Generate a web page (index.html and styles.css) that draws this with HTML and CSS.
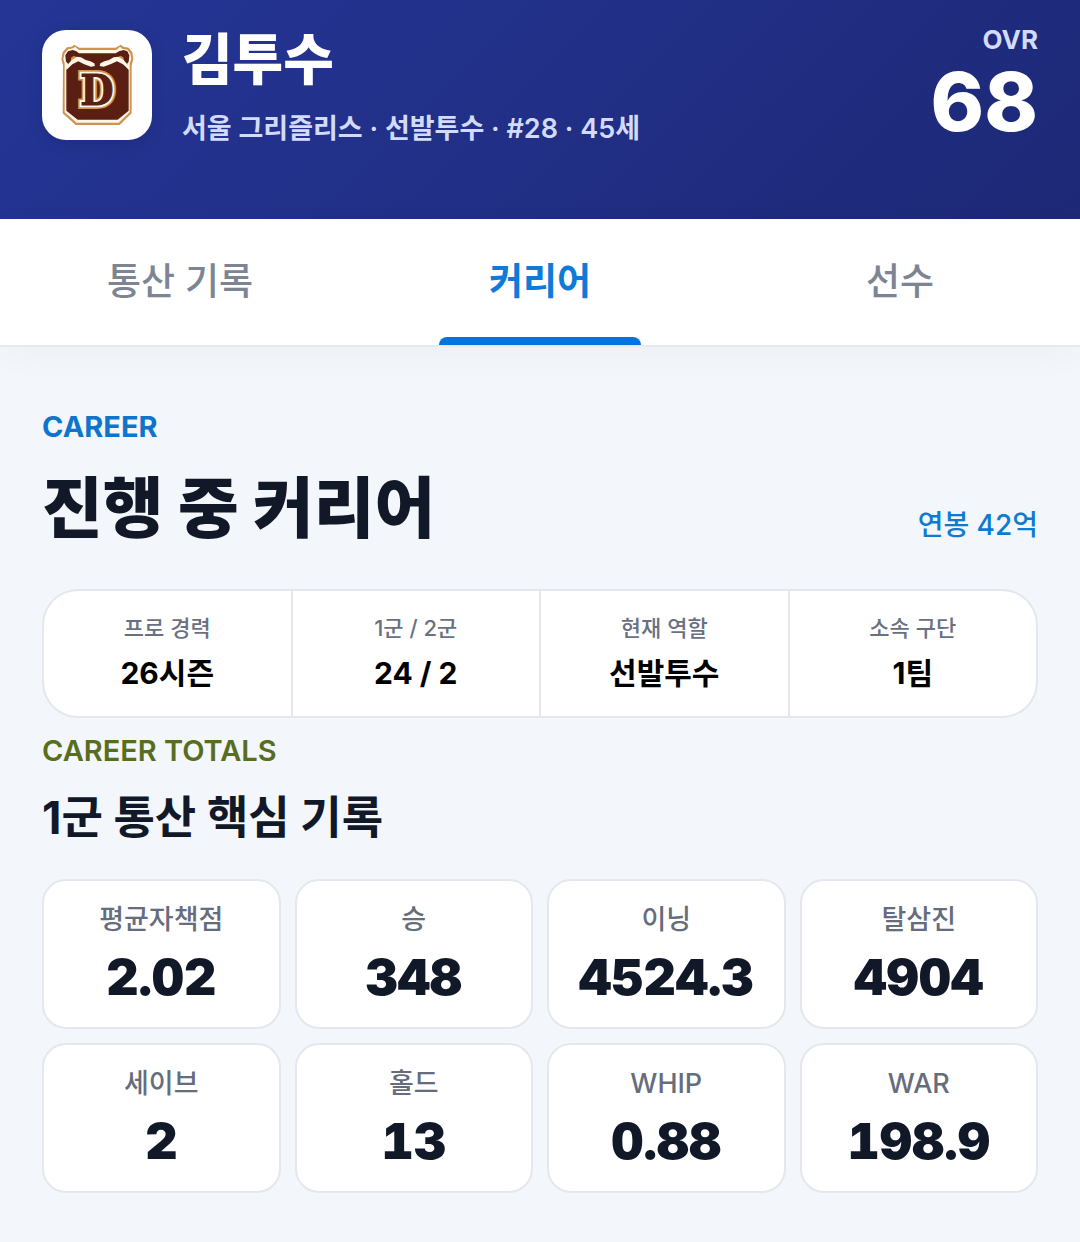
FILE: index.html
```html
<!DOCTYPE html>
<html lang="ko">
<head>
    <meta charset="UTF-8">
    <meta name="viewport" content="width=device-width, initial-scale=1.0">
    <title>김투수 - 커리어</title>
    <link rel="stylesheet" href="styles.css">
</head>
<body>
    <header class="player-header">
        <div class="team-logo">
            <svg viewBox="35 30 330 330" role="img" aria-label="서울 그리즐리스">
                <path class="logo-gold" d="M98 136L93 118L97 97L110 82L124 80L132 74L147 83H256L271 74L279 80L295 83L306 97L309 118L304 136V280L268 315H136L97 280Z"/>
                <path class="logo-cream" d="M103 130L99 117L103 100L114 88L128 85L134 80L146 90H258L269 80L276 86L291 89L300 101L303 117L298 130V277L265 308H139L103 277Z"/>
                <path class="logo-brown" d="M107 125L105 106L113 94L127 90L138 94L146 100H256L266 94L280 90L291 94L297 106L295 125L290 132L295 142V272L262 299H142L108 272V144L114 132Z"/>
                <path class="logo-gold" d="M121 122L123 112L132 107L142 113L132 120ZM281 122L279 112L270 107L260 113L270 120Z"/>
                <path class="logo-cream" d="M107 140L124 120L140 110L152 112L166 120L180 124L192 130L194 138L182 140L160 132L144 124L126 133L108 150ZM297 140L280 120L264 110L250 112L236 120L222 124L210 130L208 138L220 140L242 132L260 124L278 133L296 150Z"/>
                <text class="logo-letter logo-letter-gold" x="200" y="255" text-anchor="middle" aria-hidden="true">D</text>
                <text class="logo-letter logo-letter-cream" x="200" y="255" text-anchor="middle" aria-hidden="true">D</text>
                <text class="logo-letter" x="200" y="255" text-anchor="middle">D</text>
            </svg>
        </div>
        <div class="player-info">
            <h1>김투수</h1>
            <p>서울 그리즐리스 · 선발투수 · #28 · 45세</p>
        </div>
        <div class="ovr">
            <span class="ovr-label">OVR</span>
            <strong class="ovr-value">68</strong>
        </div>
    </header>

    <nav class="tabs">
        <button type="button" class="tab">통산 기록</button>
        <button type="button" class="tab active">커리어</button>
        <button type="button" class="tab">선수</button>
    </nav>

    <main class="content">
        <p class="eyebrow">CAREER</p>
        <div class="title-row">
            <h2>진행 중 커리어</h2>
            <span class="salary">연봉 42억</span>
        </div>

        <dl class="summary">
            <div class="summary-item">
                <dt>프로 경력</dt>
                <dd>26시즌</dd>
            </div>
            <div class="summary-item">
                <dt>1군 / 2군</dt>
                <dd>24 / 2</dd>
            </div>
            <div class="summary-item">
                <dt>현재 역할</dt>
                <dd>선발투수</dd>
            </div>
            <div class="summary-item">
                <dt>소속 구단</dt>
                <dd>1팀</dd>
            </div>
        </dl>

        <p class="eyebrow totals">CAREER TOTALS</p>
        <h3>1군 통산 핵심 기록</h3>

        <dl class="stats">
            <div class="stat">
                <dt>평균자책점</dt>
                <dd>2.02</dd>
            </div>
            <div class="stat">
                <dt>승</dt>
                <dd>348</dd>
            </div>
            <div class="stat">
                <dt>이닝</dt>
                <dd>4524.3</dd>
            </div>
            <div class="stat">
                <dt>탈삼진</dt>
                <dd>4904</dd>
            </div>
            <div class="stat">
                <dt>세이브</dt>
                <dd>2</dd>
            </div>
            <div class="stat">
                <dt>홀드</dt>
                <dd>13</dd>
            </div>
            <div class="stat">
                <dt>WHIP</dt>
                <dd>0.88</dd>
            </div>
            <div class="stat">
                <dt>WAR</dt>
                <dd>198.9</dd>
            </div>
        </dl>
    </main>
</body>
</html>
```

FILE: styles.css
```css
* {
    box-sizing: border-box;
}
body {
    margin: 0;
    background-color: #f3f6fa;
    color: #111827;
    font-family: Inter, "Noto Sans CJK KR", sans-serif;
}
h1, h2, h3, p, dl, dd {
    margin: 0;
}

/* header */
.player-header {
    display: flex;
    align-items: flex-start;
    padding: 30px 42px 72px;
    background: linear-gradient(135deg, #243596 0%, #212f86 50%, #1d2876 100%);
    color: white;
}
.team-logo {
    flex: none;
    width: 110px;
    height: 110px;
    margin-right: 30px;
    border-radius: 24px;
    background-color: white;
    box-shadow: 0 4px 16px rgba(0, 0, 0, 0.12);
}
.team-logo svg {
    display: block;
    width: 100%;
    height: 100%;
}
.logo-gold {
    fill: #cf9350;
}
.logo-cream {
    fill: #fff6e8;
}
.logo-brown {
    fill: #5a1f12;
}
.logo-letter {
    font-family: "DejaVu Serif Condensed", "DejaVu Serif", serif;
    font-size: 128px;
    font-weight: bold;
    fill: #5a1f12;
    stroke: #5a1f12;
    stroke-width: 3px;
}
.logo-letter-gold {
    fill: #cf9350;
    stroke: #cf9350;
    stroke-width: 24px;
}
.logo-letter-cream {
    fill: #fff6e8;
    stroke: #fff6e8;
    stroke-width: 14px;
}
.player-info {
    flex: 1;
}
.player-info h1 {
    font-size: 55px;
    font-weight: 800;
    line-height: 58px;
}
.player-info p {
    margin-top: 25px;
    color: #d3dbfd;
    font-size: 27px;
    font-weight: 600;
    line-height: 32px;
}
.ovr {
    display: flex;
    flex-direction: column;
    align-items: flex-end;
}
.ovr-label {
    color: #d3dbfd;
    font-size: 26px;
    font-weight: 700;
    line-height: 20px;
}
.ovr-value {
    margin-top: 8px;
    font-size: 81px;
    font-weight: 800;
    line-height: 89px;
}

/* tabs */
.tabs {
    position: relative;
    display: grid;
    grid-template-columns: repeat(3, 1fr);
    height: 128px;
    border-bottom: 2px solid #e6e9ee;
    background-color: white;
    box-shadow: 0 8px 32px rgba(17, 24, 39, 0.03);
}
.tab {
    position: relative;
    padding: 0 0 6px;
    border: 0;
    background: none;
    color: #7d8595;
    font-family: inherit;
    font-size: 37px;
    font-weight: 500;
    cursor: pointer;
}
.tab.active {
    color: #0f7bd8;
    font-weight: 600;
}
.tab.active::after {
    content: "";
    position: absolute;
    left: 22%;
    right: 22%;
    bottom: 0;
    height: 8px;
    border-radius: 8px 8px 0 0;
    background-color: #0474dc;
}

/* content */
.content {
    padding: 63px 42px 48px;
}
.eyebrow {
    color: #0f75cc;
    font-size: 29px;
    font-weight: 700;
    line-height: 34px;
}
.eyebrow.totals {
    margin-top: 16px;
    color: #596d20;
    font-weight: 600;
}
.title-row {
    display: flex;
    justify-content: space-between;
    align-items: flex-end;
    margin-top: 22px;
}
.title-row h2 {
    font-size: 66px;
    font-weight: 800;
    line-height: 84px;
}
.salary {
    color: #0f7bd0;
    font-size: 28px;
    font-weight: 500;
    line-height: 50px;
}
.summary {
    display: grid;
    grid-template-columns: repeat(4, 1fr);
    gap: 2px;
    margin-top: 39px;
    border: 2px solid #e4e7ec;
    border-radius: 36px;
    background-color: #e4e7ec;
    overflow: hidden;
}
.summary-item {
    padding: 20px 8px;
    background-color: white;
    text-align: center;
}
.summary-item dt {
    color: #697181;
    font-size: 22px;
    font-weight: 500;
    line-height: 34px;
}
.summary-item dd {
    margin-top: 6px;
    color: black;
    font-size: 30px;
    font-weight: 700;
    line-height: 45px;
}
.content h3 {
    margin-top: 20px;
    font-size: 45px;
    font-weight: 700;
    line-height: 60px;
}
.stats {
    display: grid;
    grid-template-columns: repeat(4, 1fr);
    gap: 14px;
    margin-top: 31px;
}
.stat {
    padding: 20px 8px 18px;
    border: 2px solid #e4e7ee;
    border-radius: 24px;
    background-color: white;
    text-align: center;
}
.stat dt {
    color: #656d7c;
    font-size: 27px;
    font-weight: 500;
    line-height: 38px;
}
.stat dd {
    margin-top: 6px;
    font-size: 50px;
    font-weight: 900;
    font-variant-numeric: tabular-nums;
    line-height: 64px;
}
```
